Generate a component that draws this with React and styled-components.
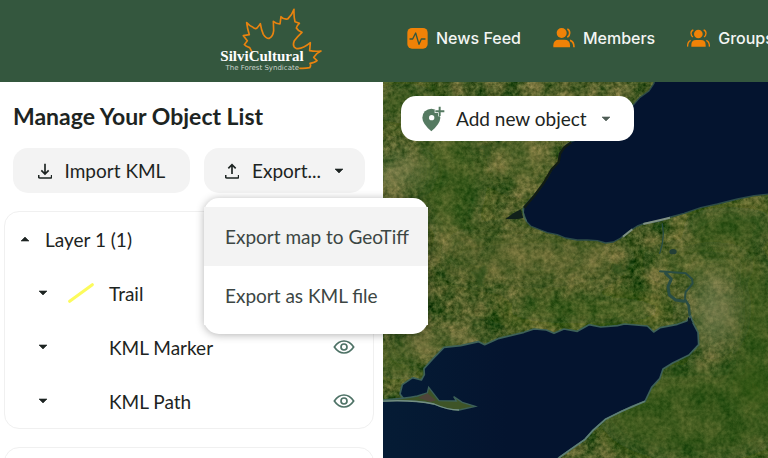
import React, { useState } from 'react'
import styled, { createGlobalStyle } from 'styled-components';


const layerItems = [
    { id: 'trail', name: 'Trail', line: true },
    { id: 'marker', name: 'KML Marker' },
    { id: 'path', name: 'KML Path' },
];

const Leaf = () => (
    <svg viewBox="57 24 312 192" aria-hidden="true">
        <path
            d="M155 154L149 143Q136 139 133 134L142 122L130 107L148 104Q142 86 140 68Q150 79 159 82Q166 88 171 84Q177 78 181 71Q184 90 190 103Q198 116 208 115Q219 110 221 92L220 64Q228 71 240 72L243 50Q250 59 263 57Q276 46 282 28Q281 50 285 65L298 70Q290 77 289 84Q295 94 306 97Q292 110 283 122Q276 140 288 145Q306 149 331 128L329 152Q345 155 363 153Q349 159 341 172L351 182Q345 188 330 190Q334 196 329 203Q315 206 300 205"
            fill="none" stroke="#e8830f" strokeWidth="5" strokeLinejoin="round" strokeLinecap="round"
        />
    </svg>
)

const FeedIcon = () => (
    <svg width="21" height="21" viewBox="36 84 63 63" aria-hidden="true">
        <rect x="37" y="84" width="61" height="62" rx="14" fill="#f08207" />
        <path d="M45 117H53L62 99L72 133L79 117H90" fill="none" stroke="#34573e" strokeWidth="4" strokeLinejoin="round" strokeLinecap="round" />
    </svg>
)

const MembersIcon = () => (
    <svg width="22" height="20" viewBox="472 86 66 60" aria-hidden="true">
        <circle cx="498" cy="101" r="15" fill="#f08207" />
        <path d="M473 144V138Q473 121 490 121H506Q523 121 523 138V144Z" fill="#f08207" />
        <path d="M515 89Q522 92 522 101Q522 110 515 114M523 123Q535 126 535 144" fill="none" stroke="#f08207" strokeWidth="5" />
    </svg>
)

const GroupsIcon = () => (
    <svg width="23" height="18" viewBox="880 88 69 54" aria-hidden="true">
        <circle cx="914" cy="103" r="13" fill="#f08207" />
        <path d="M893 141V136Q893 121 907 121H922Q936 121 936 136V141Z" fill="#f08207" />
        <path d="M899 91Q892 93 892 101Q892 109 898 112M930 91Q937 93 937 101Q937 109 931 112M882 141Q881 127 891 122M947 141Q948 127 938 122" fill="none" stroke="#f08207" strokeWidth="4" />
    </svg>
)

const ImportIcon = () => (
    <svg width="14" height="16" viewBox="108 216 42 48" aria-hidden="true">
        <path d="M129 218V248M118 238L129 249L140 238M110 252V257Q110 261 114 261H145Q149 261 149 257V252" fill="none" stroke="currentColor" strokeWidth="5" />
    </svg>
)

const ExportIcon = () => (
    <svg width="14" height="16" viewBox="88 216 42 48" aria-hidden="true">
        <path d="M109 249V221M98 232L109 221L120 232M90 252V257Q90 261 94 261H125Q129 261 129 257V252" fill="none" stroke="currentColor" strokeWidth="5" />
    </svg>
)

const Caret = ({ up }) => (
    <svg width="10" height="6" viewBox="0 0 10 6" aria-hidden="true">
        <path d={up ? 'M1 5L5 1L9 5Z' : 'M1 1H9L5 5Z'} fill="currentColor" stroke="currentColor" strokeWidth="0.6" strokeLinejoin="round" />
    </svg>
)

const EyeIcon = () => (
    <svg width="22" height="16" viewBox="414 448 66 48" aria-hidden="true">
        <path d="M418 472Q430 454 447 454Q464 454 476 472Q464 490 447 490Q430 490 418 472Z" fill="none" stroke="currentColor" strokeWidth="5" />
        <circle cx="447" cy="472" r="9" fill="none" stroke="currentColor" strokeWidth="5" />
    </svg>
)

const TrailLine = () => (
    <svg width="26" height="20" viewBox="205 239 78 60" aria-hidden="true">
        <path d="M210 294L278 244" stroke="#fcfb5c" strokeWidth="9" strokeLinecap="round" />
    </svg>
)

const PinIcon = () => (
    <svg width="24" height="26" viewBox="84 42 72 78" aria-hidden="true">
        <path d="M112 118Q85 94 85 77A27 27 0 0 1 139 77Q139 94 112 118Z" fill="#557a61" />
        <circle cx="113" cy="77" r="8" fill="#fff" />
        <path d="M137 43V73M122 58H152" stroke="#fff" strokeWidth="10" />
        <path d="M137 44V72M124 58H151" stroke="#557a61" strokeWidth="6" />
    </svg>
)

const Satellite = () => (
    <MapImage viewBox="-3 6 1155 1128" preserveAspectRatio="xMinYMin slice" role="img" aria-label="Satellite map">
        <defs>
            <filter id="ground" x="0" y="0" width="100%" height="100%" colorInterpolationFilters="sRGB">
                <feTurbulence type="fractalNoise" baseFrequency="0.08" numOctaves="4" seed="8" />
                <feColorMatrix type="matrix" values="0.46 0 0 0 0.06  0.36 0 0 0 0.18  0.3 0 0 0 0  0 0 0 0 1" result="fine" />
                <feTurbulence type="fractalNoise" baseFrequency="0.014" numOctaves="4" seed="21" />
                <feColorMatrix type="matrix" values="0.6 0 0 0 -0.06  0.32 0 0 0 0.08  0.3 0 0 0 0.09  0 0 0 0 1" result="coarse" />
                <feComposite in="fine" in2="coarse" operator="arithmetic" k2="1" k3="1" k4="-0.24" />
            </filter>
            <filter id="soft" x="-60%" y="-60%" width="220%" height="220%">
                <feGaussianBlur stdDeviation="34" />
            </filter>
            <filter id="patchy" x="-20%" y="-20%" width="140%" height="140%">
                <feTurbulence type="fractalNoise" baseFrequency="0.03" numOctaves="3" seed="3" />
                <feDisplacementMap in="SourceGraphic" scale="26" />
                <feGaussianBlur stdDeviation="5" />
            </filter>
            <linearGradient id="lake" x1="0" y1="0" x2="1" y2="0">
                <stop offset="0" stopColor="#051c35" />
                <stop offset="0.4" stopColor="#04142f" />
            </linearGradient>
        </defs>

        <rect x="-3" y="6" width="1155" height="1128" filter="url(#ground)" />

        {/* bare fields and darker woods */}
        <g filter="url(#soft)">
            <ellipse cx="40" cy="275" rx="90" ry="50" fill="#8d905c" opacity="0.5" />
            <ellipse cx="410" cy="240" rx="80" ry="80" fill="#80803f" opacity="0.4" />
            <ellipse cx="440" cy="530" rx="280" ry="80" fill="#70733a" opacity="0.4" />
            <ellipse cx="180" cy="790" rx="170" ry="40" fill="#7e7d44" opacity="0.45" />
            <ellipse cx="985" cy="690" rx="60" ry="110" fill="#8b8c5e" opacity="0.6" />
            <ellipse cx="960" cy="550" rx="170" ry="40" fill="#6d7538" opacity="0.45" />
            <ellipse cx="200" cy="300" rx="110" ry="170" fill="#345a16" opacity="0.45" />
            <ellipse cx="60" cy="70" rx="110" ry="60" fill="#3a5c1b" opacity="0.4" />
            <ellipse cx="940" cy="1000" rx="300" ry="150" fill="#2f5611" opacity="0.55" />
            <ellipse cx="1040" cy="440" rx="150" ry="60" fill="#315813" opacity="0.55" />
            <ellipse cx="1120" cy="760" rx="80" ry="220" fill="#2f5611" opacity="0.55" />
            <ellipse cx="600" cy="690" rx="260" ry="40" fill="#3f611a" opacity="0.5" />
            <ellipse cx="40" cy="850" rx="60" ry="50" fill="#3a5c1b" opacity="0.5" />
        </g>
        <g fill="#254b12" opacity="0.6" filter="url(#patchy)">
            <path d="M262 575L300 555L318 575L285 620Z" />
            <path d="M690 555L715 540L712 590L692 580Z" />
            <path d="M290 195L325 195L320 235L300 230Z" />
        </g>

        {/* upper lake */}
        <path
            d="M812 -4L810 10L795 33L768 52L745 78L720 110L640 160L562 185L545 196L527 220L524 246L503 268L491 291L469 324L451 345L420 380L418 398L428 425L440 438L470 450L490 458L520 464L545 474L580 480L610 480L640 482L665 489L688 486L710 474L735 454L760 438L785 429L824 424L860 411L900 400L950 383L1000 372L1060 357L1110 347L1165 341V-4Z"
            fill="#04142f" stroke="#2c4b48" strokeWidth="4" strokeLinejoin="round"
        />
        <path d="M562 187L540 203L528 222L524 246L503 268L480 308L451 347L420 383" fill="none" stroke="#111c13" strokeWidth="7" />
        <path d="M364 417L388 400L410 388L418 414L395 418Z" fill="#10201a" />
        <path d="M416 386L420 410L428 425" fill="none" stroke="#456657" strokeWidth="4" />
        <path d="M717 470L745 448M778 432L858 413" stroke="#7f9084" strokeWidth="6" fill="none" />

        {/* river between the lakes */}
        <g fill="none" stroke="#2a4d43" strokeLinejoin="round" strokeLinecap="round">
            <path d="M835 432L838 460L835 492L827 520" strokeWidth="4" />
            <path d="M828 574L865 577L905 580L924 597L926 610L905 636L903 652" strokeWidth="6" />
            <path d="M845 580L862 597L852 620L856 645L875 660L900 664" strokeWidth="9" />
            <path d="M903 658L914 676L917 705" strokeWidth="8" />
        </g>
        <ellipse cx="867" cy="515" rx="11" ry="8" fill="#233f35" />

        {/* lower lake */}
        <path
            d="M-13 964L60 958L48 942L55 914L86 893L112 900L121 884L120 866L145 838L180 802L230 797L284 785L302 794L345 775L420 757L450 747L487 750L510 760L540 747L580 754L615 734L650 741L700 737L722 732L790 738L809 756L829 743L880 733L908 723L920 708L928 731L942 757L944 794L928 811L915 825L866 849L837 867L827 896L803 922L783 964L745 979L713 994L664 1018L627 1051L603 1078L560 1108L524 1134L510 1146H-13Z"
            fill="url(#lake)" stroke="#3d6058" strokeWidth="5" strokeLinejoin="round"
        />
        <path d="M524 1134L560 1108L603 1078L627 1051L664 1018L713 994L783 964" fill="none" stroke="#5f7f76" strokeWidth="5" />
        <path d="M-13 963Q80 957 150 972Q190 990 225 990L274 979L235 967L209 950L217 963L165 962L134 922L130 939L100 948Q60 956 -13 960Z" fill="#3e5427" stroke="#3d6058" strokeWidth="4" />
        <path d="M103 953L130 940L155 961L140 966Z" fill="#4f4539" />
        <path d="M-13 964Q80 958 150 972Q190 990 225 990" fill="none" stroke="#748f82" strokeWidth="4" />
        <path d="M912 710L926 728L912 734Z" fill="#071827" />
    </MapImage>
)


function App() {

    const [menuOpen, setMenuOpen] = useState(true);
    const [layerOpen, setLayerOpen] = useState(true);

  return (
    <Page>
        <GlobalStyle />
        <Header>
            <Logo href="#">
                <Leaf />
                <LogoText>
                    <strong>SilviCultural</strong>
                    <small>The Forest Syndicate</small>
                </LogoText>
            </Logo>
            <Nav>
                <NavLink href="#feed"><FeedIcon />News Feed</NavLink>
                <NavLink href="#members"><MembersIcon />Members</NavLink>
                <NavLink href="#groups"><GroupsIcon />Groups</NavLink>
            </Nav>
        </Header>

        <Main>
            <Sidebar>
                <Title>Manage Your Object List</Title>
                <Actions>
                    <ActionButton type="button" $grow><ImportIcon />Import KML</ActionButton>
                    <MenuWrap>
                        <ActionButton type="button" aria-expanded={menuOpen} onClick={() => setMenuOpen(!menuOpen)}>
                            <ExportIcon />Export...<Caret />
                        </ActionButton>
                        {menuOpen && (
                            <Menu>
                                <MenuItem type="button" $active>Export map to GeoTiff</MenuItem>
                                <MenuItem type="button">Export as KML file</MenuItem>
                            </Menu>
                        )}
                    </MenuWrap>
                </Actions>

                <LayerCard>
                    <LayerHead type="button" aria-expanded={layerOpen} onClick={() => setLayerOpen(!layerOpen)}>
                        <Caret up={layerOpen} />Layer 1 (1)
                    </LayerHead>
                    {layerOpen && layerItems.map((item) => (
                        <ItemRow key={item.id}>
                            <IconButton type="button" aria-label={`Expand ${item.name}`}><Caret /></IconButton>
                            <Swatch>{item.line && <TrailLine />}</Swatch>
                            <ItemName>{item.name}</ItemName>
                            <EyeButton type="button" aria-label={`Show ${item.name}`}><EyeIcon /></EyeButton>
                        </ItemRow>
                    ))}
                </LayerCard>
                <LayerCard />
            </Sidebar>

            <MapPane>
                <Satellite />
                <AddButton type="button">
                    <PinIcon />
                    <span>Add new object</span>
                    <Caret />
                </AddButton>
            </MapPane>
        </Main>
    </Page>
  )
}

const GlobalStyle = createGlobalStyle`
    * {
        box-sizing: border-box;
    }

    body {
        margin: 0;
        background-color: #fff;
        color: #1d2422;
        font-family: Lato, "Noto Sans", sans-serif;
        font-size: 19px;
    }

    button {
        border: none;
        background: none;
        padding: 0;
        color: inherit;
        font: inherit;
        cursor: pointer;
    }

    svg {
        flex-shrink: 0;
    }
`;

const Page = styled.div`
    height: 100vh;
    display: flex;
    flex-direction: column;
    overflow: hidden;
`;

const Header = styled.header`
    flex-shrink: 0;
    height: 82px;
    padding: 8px 0 10px 219px;
    display: flex;
    background-color: #34573e;
`;

const Logo = styled.a`
    position: relative;
    flex-shrink: 0;
    width: 104px;
    height: 64px;
    color: #fff;
    text-decoration: none;

    svg{
        display: block;
        width: 100%;
    }
`;

const LogoText = styled.span`
    position: absolute;
    left: 0;
    bottom: 0;
    width: 86px;
    display: flex;
    flex-direction: column;
    align-items: center;
    white-space: nowrap;

    strong{
        font: bold 15px/16px "Liberation Serif", serif;
    }

    small{
        align-self: flex-end;
        margin-right: 6px;
        font: 7px/8px "DejaVu Sans", sans-serif;
        color: #c9d3cb;
    }
`;

const Nav = styled.nav`
    margin-left: 84px;
    height: 60px;
    display: flex;
    align-items: center;
    gap: 32px;
`;

const NavLink = styled.a`
    display: flex;
    align-items: center;
    gap: 8px;
    color: #f3f5f3;
    font-family: Inter, sans-serif;
    font-size: 16px;
    font-weight: 500;
    text-decoration: none;
    white-space: nowrap;
`;

const Main = styled.main`
    flex: 1;
    min-height: 0;
    display: flex;
`;

const Sidebar = styled.section`
    position: relative;
    z-index: 1;
    width: calc(50% - 1px);
    padding: 20px 9px 0 4px;
    display: flex;
    flex-direction: column;
    gap: 18px;
`;

const Title = styled.h1`
    margin: 0;
    padding-left: 9px;
    font-size: 23px;
    font-weight: 700;
    line-height: 28px;
`;

const Actions = styled.div`
    padding: 0 9px;
    display: flex;
    gap: 14px;
`;

const ActionButton = styled.button`
    width: ${(props) => (props.$grow ? '100%' : 'auto')};
    height: 45px;
    padding: 0 21px;
    display: flex;
    align-items: center;
    justify-content: center;
    gap: 13px;
    border-radius: 15px;
    background-color: #f3f3f3;
    white-space: nowrap;
`;

const MenuWrap = styled.div`
    position: relative;
`;

const Menu = styled.div`
    position: absolute;
    top: 50px;
    left: 0;
    width: 224px;
    padding: 9px 0;
    border-radius: 15px;
    background-color: #fff;
    box-shadow: 0 1px 8px rgba(0, 0, 0, 0.3);
`;

const MenuItem = styled.button`
    width: 100%;
    height: 59px;
    padding: 0 21px;
    background-color: ${(props) => (props.$active ? '#f3f3f3' : '#fff')};
    color: #3c4643;
    text-align: left;
    white-space: nowrap;
`;

const LayerCard = styled.div`
    flex-shrink: 0;
    min-height: 60px;
    border: 1px solid #f0f0f0;
    border-radius: 15px;
`;

const LayerHead = styled.button`
    height: 54px;
    padding: 0 15px;
    display: flex;
    align-items: center;
    gap: 15px;
`;

const ItemRow = styled.div`
    height: 54px;
    padding: 0 18px 0 33px;
    display: flex;
    align-items: center;
`;

const IconButton = styled.button`
    display: flex;
`;

const Swatch = styled.span`
    width: 61px;
    padding-left: 20px;
    display: flex;
`;

const ItemName = styled.span`
    flex: 1;
`;

const EyeButton = styled.button`
    display: flex;
    color: #4e7266;
`;

const MapPane = styled.section`
    position: relative;
    flex: 1;
    padding: 14px 18px;
    background-color: #3f5c1e;
    overflow: hidden;
`;

const MapImage = styled.svg`
    position: absolute;
    inset: 0;
    width: 100%;
    height: 100%;
`;

const AddButton = styled.button`
    position: relative;
    height: 45px;
    padding: 0 23px 0 21px;
    display: flex;
    align-items: center;
    gap: 10px;
    border-radius: 15px;
    background-color: #fff;
    white-space: nowrap;

    svg:last-child{
        margin-left: 4px;
        color: #4f5d56;
    }
`;


export default App
